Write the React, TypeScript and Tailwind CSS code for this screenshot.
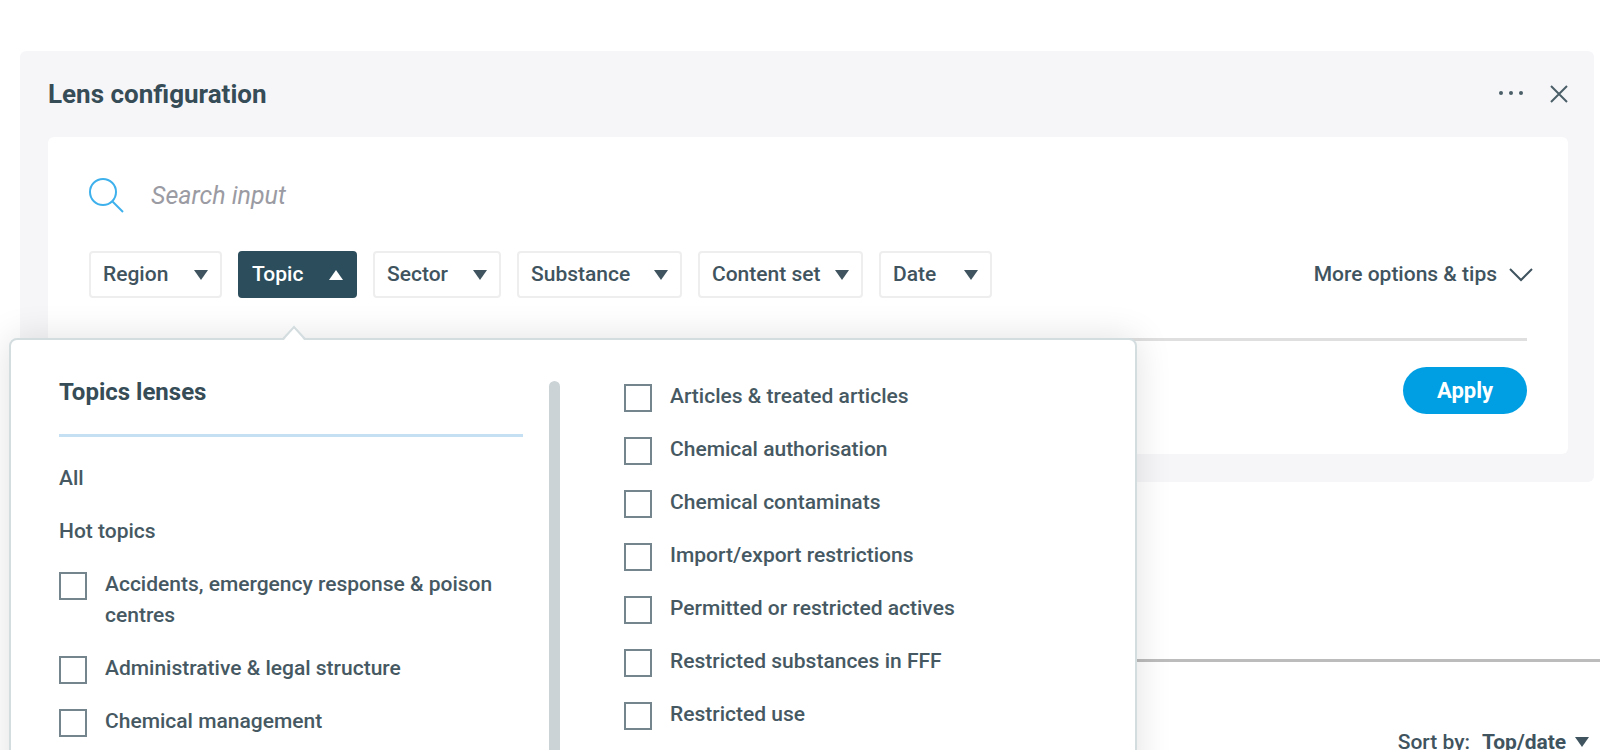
import { useState } from 'react';
import clsx from 'clsx';

const filters = [
  { name: 'Region', width: 'w-[133px]' },
  { name: 'Topic', width: 'w-[119px]' },
  { name: 'Sector', width: 'w-[128px]' },
  { name: 'Substance', width: 'w-[165px]' },
  { name: 'Content set', width: 'w-[165px]' },
  { name: 'Date', width: 'w-[113px]' },
];

const hotTopics = [
  'Accidents, emergency response & poison centres',
  'Administrative & legal structure',
  'Chemical management',
];

const lenses = [
  'Articles & treated articles',
  'Chemical authorisation',
  'Chemical contaminats',
  'Import/export restrictions',
  'Permitted or restricted actives',
  'Restricted substances in FFF',
  'Restricted use',
];

const Caret = ({ up = false }: { up?: boolean }) => (
  <svg width="14" height="10" viewBox="0 0 14 10" fill="currentColor" className="shrink-0" aria-hidden="true">
    {up ? <path d="M7 0l7 10H0z" /> : <path d="M0 0h14L7 10z" />}
  </svg>
);

const CheckRow = ({ label }: { label: string }) => (
  <label className="flex items-start gap-[18px] cursor-pointer">
    <input
      type="checkbox"
      className="mt-[3px] size-7 shrink-0 appearance-none border-2 border-[#75858d] bg-white checked:bg-[#2c4d5b]"
    />
    <span>{label}</span>
  </label>
);

const TopicMenu = () => (
  <div className="absolute top-[287px] -left-[11px] z-10 flex min-h-[520px] w-[1128px] rounded-lg border-2 border-[#d3dcdf] bg-white pl-12 text-[21px] leading-[31px] font-medium text-[#465963] shadow-[0_0_36px_rgba(0,0,0,0.12)]">
    <svg width="26" height="16" viewBox="0 0 26 16" className="absolute -top-[15px] left-[270px]" aria-hidden="true">
      <path d="M2 16L13 3l11 13z" fill="#fff" />
      <path d="M2 14L13 2l11 12" fill="none" stroke="#d3dcdf" strokeWidth="2" />
    </svg>

    <div className="w-[464px] pt-[38px]">
      <h2 className="border-b-[3px] border-[#c5e0f2] pb-7 text-[24px] leading-7 font-bold text-[#364c57]">Topics lenses</h2>
      <div className="mt-[26px] flex flex-col items-start gap-[22px]">
        <button type="button">All</button>
        <button type="button">Hot topics</button>
        {hotTopics.map(t => <CheckRow key={t} label={t} />)}
      </div>
    </div>

    <div className="mt-[41px] ml-[26px] w-[11px] rounded-t-full bg-[#cbd3d7]" />

    <div className="ml-16 flex flex-col gap-[22px] pt-[41px]">
      {lenses.map(t => <CheckRow key={t} label={t} />)}
    </div>
  </div>
);

export default function App() {
  const [open, setOpen] = useState<string | null>('Topic');

  return (
    <main className="h-screen overflow-hidden bg-white pt-[51px] font-['Roboto','Liberation_Sans',sans-serif] text-[#3f545e]">
      <section className="relative mr-[6px] ml-5 rounded-md bg-[#f6f6f9] pr-[26px] pb-7 pl-7">
        <header className="flex h-[86px] items-center justify-between">
          <h1 className="text-[26px] leading-8 font-bold text-[#364c57]">Lens configuration</h1>
          <div className="flex items-center gap-[26px]">
            <button type="button" aria-label="More">
              <svg width="26" height="18" viewBox="0 0 26 18" fill="#4b5f68">
                <circle cx="3" cy="8" r="2" />
                <circle cx="13" cy="8" r="2" />
                <circle cx="23" cy="8" r="2" />
              </svg>
            </button>
            <button type="button" aria-label="Close">
              <svg width="18" height="18" viewBox="0 0 18 18" fill="none" stroke="#4b5f68" strokeWidth="2">
                <path d="M1 1l16 16M17 1L1 17" />
              </svg>
            </button>
          </div>
        </header>

        <div className="rounded-md bg-white px-[41px] pt-9 pb-10">
          <label className="flex items-center gap-[26px]">
            <svg width="36" height="40" viewBox="0 0 36 40" fill="none" stroke="#3eb1ec" strokeWidth="2" aria-hidden="true">
              <circle cx="14" cy="17" r="13" />
              <path d="M23.5 26.5L34 37" />
            </svg>
            <input
              type="text"
              aria-label="Search"
              placeholder="Search input"
              className="h-11 flex-1 text-[25px] italic outline-none placeholder:text-[#9b9ba3]"
            />
          </label>

          <div className="mt-[34px] flex items-center justify-between text-[21px] font-medium">
            <div className="flex gap-4">
              {filters.map(f => (
                <button
                  key={f.name}
                  type="button"
                  aria-expanded={open === f.name}
                  onClick={() => setOpen(open === f.name ? null : f.name)}
                  className={clsx(
                    'flex h-[47px] items-center justify-between rounded border-2 px-3 whitespace-nowrap',
                    f.width,
                    open === f.name ? 'border-[#2c4d5b] bg-[#2c4d5b] text-white' : 'border-[#eeeeee] bg-white'
                  )}
                >
                  {f.name}
                  <Caret up={open === f.name} />
                </button>
              ))}
            </div>
            <button type="button" className="-mr-[6px] flex items-center gap-3">
              More options & tips
              <svg width="24" height="14" viewBox="0 0 24 14" fill="none" stroke="currentColor" strokeWidth="2" aria-hidden="true">
                <path d="M1 1l11 11L23 1" />
              </svg>
            </button>
          </div>

          <hr className="mt-10 border-t-[3px] border-[#dfdfdf]" />

          <div className="mt-[26px] flex justify-end">
            <button type="button" className="h-[47px] w-[124px] rounded-full bg-[#009fe3] text-[22px] font-bold text-white">
              Apply
            </button>
          </div>
        </div>

        {open === 'Topic' && <TopicMenu />}
      </section>

      <hr className="mt-[177px] ml-5 border-t-[3px] border-[#bcbcbc]" />

      <div className="mt-[66px] flex items-center justify-end gap-3 pr-[11px] text-[21px] leading-7">
        <label htmlFor="sort" className="font-medium">Sort by:</label>
        <div className="flex items-center gap-2">
          <select id="sort" className="appearance-none bg-transparent font-bold outline-none">
            <option>Top/date</option>
          </select>
          <Caret />
        </div>
      </div>
    </main>
  );
}
